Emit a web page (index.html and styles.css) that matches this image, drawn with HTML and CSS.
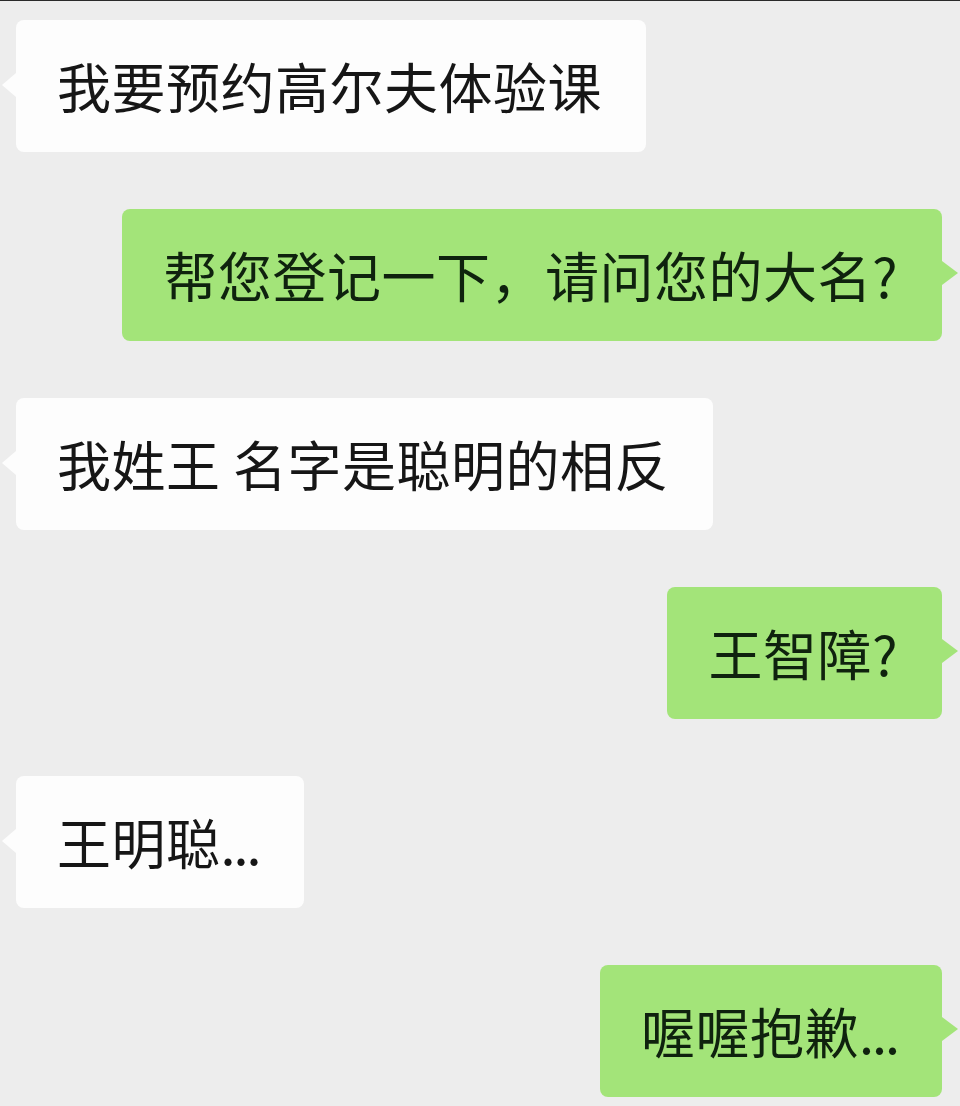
FILE: index.html
```html
<!DOCTYPE html>
<html lang="zh-CN">
<head>
<meta charset="utf-8">
<title>Chat</title>
<link rel="stylesheet" href="styles.css">
</head>
<body>
<div class="chat">
  <div class="row left"><div class="bubble in">我要预约高尔夫体验课</div></div>
  <div class="row right"><div class="bubble out">帮您登记一下，请问您的大名?</div></div>
  <div class="row left"><div class="bubble in">我姓王 名字是聪明的相反</div></div>
  <div class="row right"><div class="bubble out">王智障?</div></div>
  <div class="row left"><div class="bubble in">王明聪<span class="dots">...</span></div></div>
  <div class="row right"><div class="bubble out">喔喔抱歉<span class="dots">...</span></div></div>
</div>
</body>
</html>
```
FILE: styles.css
```css
html, body {
  margin: 0;
  padding: 0;
}
body {
  background: #ededed;
  border-top: 1px solid #2a2a2a;
  width: 960px;
  height: 1105px;
  overflow: hidden;
  font-family: "Noto Sans CJK SC", "Noto Sans", sans-serif;
  color: #161616;
}
.chat {
  display: flex;
  flex-direction: column;
  gap: 57px;
  padding-top: 19px;
}
.row {
  display: flex;
}
.row.left {
  justify-content: flex-start;
  padding-left: 16px;
}
.row.right {
  justify-content: flex-end;
  padding-right: 18px;
}
.bubble {
  position: relative;
  box-sizing: border-box;
  height: 132px;
  padding: 0 44px 0 41px;
  display: flex;
  align-items: center;
  font-size: 54px;
  line-height: 60px;
  letter-spacing: 0.5px;
  border-radius: 8px;
  white-space: pre;
}
.dots {
  letter-spacing: -2px;
}
.bubble.in {
  background: #fdfdfd;
}
.bubble.out {
  background: #a3e479;
  color: #0f220e;
}
.bubble.in::before {
  content: "";
  position: absolute;
  left: -14px;
  top: 53px;
  border-style: solid;
  border-width: 12px 14px 12px 0;
  border-color: transparent #fdfdfd transparent transparent;
}
.bubble.out::after {
  content: "";
  position: absolute;
  right: -16px;
  top: 52px;
  border-style: solid;
  border-width: 12px 0 12px 16px;
  border-color: transparent transparent transparent #a3e479;
}
```
